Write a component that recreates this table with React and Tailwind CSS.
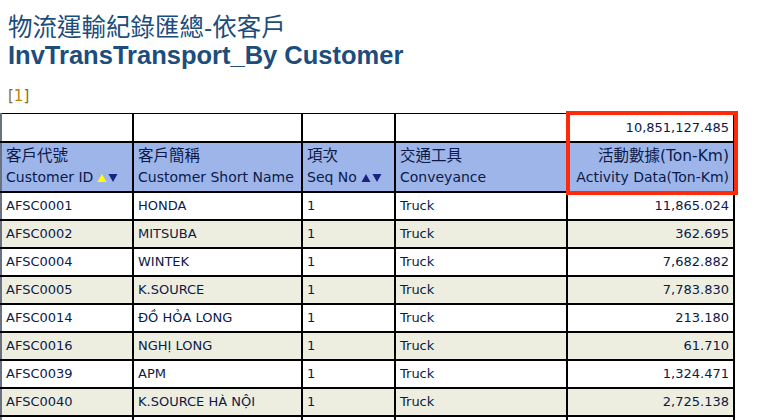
const rows = [
  ["AFSC0001", "HONDA", "1", "Truck", "11,865.024"],
  ["AFSC0002", "MITSUBA", "1", "Truck", "362.695"],
  ["AFSC0004", "WINTEK", "1", "Truck", "7,682.882"],
  ["AFSC0005", "K.SOURCE", "1", "Truck", "7,783.830"],
  ["AFSC0014", "ĐỒ HỎA LONG", "1", "Truck", "213.180"],
  ["AFSC0016", "NGHỊ LONG", "1", "Truck", "61.710"],
  ["AFSC0039", "APM", "1", "Truck", "1,324.471"],
  ["AFSC0040", "K.SOURCE HÀ NỘI", "1", "Truck", "2,725.138"],
  ["", "", "", "", ""],
];

function SortArrows({ upActive }) {
  return (
    <span className="inline-flex items-center gap-[1px] ml-1 align-middle">
      <svg width="10" height="10" viewBox="0 0 10 10">
        <path d="M5 1 L9.5 9 L0.5 9 Z" fill={upActive ? "#ffff00" : "#1a237e"} />
      </svg>
      <svg width="10" height="10" viewBox="0 0 10 10">
        <path d="M0.5 1 L9.5 1 L5 9 Z" fill="#1a237e" />
      </svg>
    </span>
  );
}

function Head({ zh, en, children }) {
  return (
    <>
      <span className="text-[15.5px]">{zh}</span>
      <br />
      {en}
      {children}
    </>
  );
}

export default function App() {
  const cell = "border-2 border-black px-[4px] align-middle";
  return (
    <div className="w-[758px] h-[420px] overflow-hidden bg-white text-[#0b1a48]" style={{ fontFamily: '"DejaVu Sans", "Noto Sans CJK TC", sans-serif' }}>
      <div className="pl-2 pt-[14px] text-[#1c4d7c]">
        <h1 className="text-[24.5px] leading-[28px]" style={{ fontFamily: '"Liberation Sans", "Noto Sans CJK TC", sans-serif' }}>物流運輸紀錄匯總-依客戶</h1>
        <h2 className="text-[25.5px] leading-[27px] font-bold" style={{ fontFamily: '"Liberation Sans", sans-serif' }}>InvTransTransport_By Customer</h2>
      </div>
      <div className="pl-2 pt-[17px] text-[15px] leading-[20px] text-[#8a6d1a]">[<span className="text-[#b8860b]">1</span>]</div>
      <div className="relative mt-[7px]">
        <table className="border-collapse text-[13px] w-[733px] table-fixed">
          <colgroup>
            <col className="w-[132px]" />
            <col className="w-[169px]" />
            <col className="w-[93px]" />
            <col className="w-[172px]" />
            <col className="w-[167px]" />
          </colgroup>
          <tbody>
            <tr className="h-[28px]">
              <td className={cell + " border-t border-l-gray-500"}></td>
              <td className={cell + " border-t"}></td>
              <td className={cell + " border-t"}></td>
              <td className={cell + " border-t"}></td>
              <td className={cell + " border-t text-right"}>10,851,127.485</td>
            </tr>
            <tr className="h-[50px] bg-[#9eb5ea] leading-[21px] text-[14px]">
              <td className={cell + " border-l-gray-500 whitespace-nowrap"}><Head zh="客戶代號" en="Customer ID"><SortArrows upActive /></Head></td>
              <td className={cell}><Head zh="客戶簡稱" en="Customer Short Name" /></td>
              <td className={cell + " whitespace-nowrap"}><Head zh="項次" en="Seq No"><SortArrows /></Head></td>
              <td className={cell}><Head zh="交通工具" en="Conveyance" /></td>
              <td className={cell + " text-right whitespace-nowrap"}><Head zh="活動數據(Ton-Km)" en="Activity Data(Ton-Km)" /></td>
            </tr>
            {rows.map((r, i) => (
              <tr key={i} className={"h-[28px] " + (i % 2 ? "bg-[#eeeee0]" : "bg-white")}>
                <td className={cell + " border-l-gray-500"}>{r[0]}</td>
                <td className={cell}>{r[1]}</td>
                <td className={cell}>{r[2]}</td>
                <td className={cell}>{r[3]}</td>
                <td className={cell + " text-right"}>{r[4]}</td>
              </tr>
            ))}
          </tbody>
        </table>
        <div className="absolute left-[566px] top-[-2px] w-[172px] h-[84px] border-4 border-[#ff2a0a] pointer-events-none"></div>
      </div>
    </div>
  );
}
